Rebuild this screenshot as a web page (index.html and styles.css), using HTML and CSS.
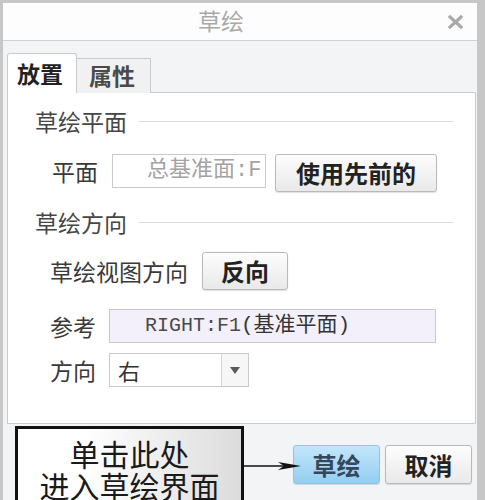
FILE: index.html
```html
<!DOCTYPE html>
<html lang="zh-CN">

<head>
    <meta charset="UTF-8">
    <meta name="viewport" content="width=device-width, initial-scale=1.0">
    <title>草绘</title>
    <link rel="stylesheet" href="styles.css">
</head>

<body>
    <div class="dialog">
        <div class="titlebar">
            <span class="title">草绘</span>
            <svg class="close" width="15" height="14" viewBox="0 0 15 14">
                <path d="M2 2 L13 12 M13 2 L2 12" stroke="#a9a9a9" stroke-width="3.2" stroke-linecap="square" />
            </svg>
        </div>

        <div class="tabs">
            <div class="tab active">放置</div>
            <div class="tab">属性</div>
        </div>

        <div class="panel">
            <div class="section">
                <span>草绘平面</span>
                <div class="rule"></div>
            </div>
            <div class="row row-plane">
                <span class="label label-plane">平面</span>
                <div class="field field-plane">总基准面:F</div>
                <button class="btn btn-prev">使用先前的</button>
            </div>

            <div class="section section-dir">
                <span>草绘方向</span>
                <div class="rule"></div>
            </div>
            <div class="row row-view">
                <span class="label">草绘视图方向</span>
                <button class="btn btn-flip">反向</button>
            </div>
            <div class="row row-ref">
                <span class="label label-ref">参考</span>
                <div class="field field-ref"><span class="mono">RIGHT:F1</span>(基准平面)</div>
            </div>
            <div class="row row-orient">
                <span class="label label-ref">方向</span>
                <div class="select">
                    <span class="select-value">右</span>
                    <span class="select-arrow">
                        <svg width="10" height="7" viewBox="0 0 10 7"><path d="M0 0 H10 L5 7 Z" fill="#5a5a5a" /></svg>
                    </span>
                </div>
            </div>
        </div>

        <div class="footer">
            <div class="callout">单击此处<br>进入草绘界面</div>
            <svg class="arrow" width="58" height="10" viewBox="0 0 58 10">
                <line x1="0" y1="5" x2="44" y2="5" stroke="#111" stroke-width="1.6" />
                <polygon points="57,5 34,1 40,5 34,9" fill="#111" />
            </svg>
            <button class="btn btn-ok">草绘</button>
            <button class="btn btn-cancel">取消</button>
        </div>
    </div>
</body>

</html>
```

FILE: styles.css
```css
* {
    margin: 0;
    padding: 0;
    box-sizing: border-box;
}

body {
    background: #c7c7c7;
    padding: 3px 0 0 3px;
    font-family: "Noto Sans CJK SC", "Liberation Sans", sans-serif;
    overflow: hidden;
}

.dialog {
    width: 474px;
    height: 520px;
    background: #f3f4f6;
}

.titlebar {
    display: flex;
    align-items: center;
    height: 38px;
    padding-right: 14px;
    background: #fdfdfd;
    border-bottom: 1px solid #d2d2d4;
}

.title {
    flex: 1;
    text-align: center;
    font-size: 23px;
    color: #a9a9a9;
    line-height: 1;
    margin-top: -2px;
}

.close {
    margin-left: 9px;
    margin-top: 1px;
}

.tabs {
    display: flex;
    align-items: flex-end;
    padding: 12px 0 0 4px;
    position: relative;
    z-index: 1;
}

.tab {
    width: 74px;
    height: 35px;
    background: #f1f1f2;
    border: 1px solid #cbcbcd;
    border-bottom: none;
    border-left: none;
    font-size: 23px;
    font-weight: bold;
    color: #4a4a4a;
    line-height: 33px;
    padding-left: 12px;
}

.tab.active {
    width: 70px;
    height: 40px;
    background: #fff;
    border-left: 1px solid #cbcbcd;
    border-radius: 3px 3px 0 0;
    color: #222;
    padding-left: 9px;
    line-height: 38px;
}

.panel {
    margin: -1px 1px 0 4px;
    height: 332px;
    background: #fff;
    border: 1px solid #cbcbcd;
    padding: 0 22px 0 0;
}

.section {
    display: flex;
    align-items: center;
    height: 28px;
    margin-top: 14px;
    padding-left: 27px;
    font-size: 23px;
    color: #464646;
}

.section-dir {
    margin-top: 16px;
}

.rule {
    flex: 1;
    height: 1px;
    background: #dcdcdc;
    margin-left: 12px;
}

.row {
    display: flex;
    align-items: center;
    padding-left: 42px;
    font-size: 23px;
    color: #3a3a3a;
}

.label {
    margin-right: 14px;
}

.label-plane {
    width: 62px;
    margin-right: 0;
    padding-left: 2px;
}

.label-ref {
    width: 59px;
    margin-right: 0;
}

.row-plane {
    margin-top: 19px;
    align-items: flex-start;
}

.row-plane .label {
    line-height: 34px;
}

.field {
    height: 34px;
    border: 1px solid #cacaca;
    background: #fff;
    line-height: 32px;
    white-space: nowrap;
    overflow: hidden;
    font-family: "Liberation Mono", "Noto Sans CJK SC", monospace;
}

.field-plane {
    width: 154px;
    padding-left: 34px;
    color: #a3a3a3;
    font-size: 22px;
}

.btn {
    font-family: "Noto Sans CJK SC", "Liberation Sans", sans-serif;
    font-weight: bold;
    font-size: 24px;
    color: #222;
    background: linear-gradient(#fdfdfd, #e9e9e9);
    border: 1px solid #b9b9b9;
    border-radius: 3px;
    box-shadow: 0 1px 1px rgba(0, 0, 0, 0.12);
    line-height: 1;
}

.btn-prev {
    width: 162px;
    height: 38px;
    margin-left: 9px;
}

.row-view {
    margin-top: 16px;
}

.btn-flip {
    width: 86px;
    height: 38px;
}

.row-ref {
    margin-top: 19px;
}

.field-ref {
    width: 327px;
    background: #f3f0fb;
    padding-left: 35px;
    font-size: 21px;
    color: #333;
}

.mono {
    color: #4a4a4a;
    font-size: 20px;
}

.row-orient {
    margin-top: 10px;
}

.select {
    display: flex;
    width: 140px;
    height: 34px;
    border: 1px solid #cacaca;
    background: #fff;
}

.select-value {
    flex: 1;
    padding-left: 8px;
    line-height: 32px;
    font-size: 22px;
    color: #333;
}

.select-arrow {
    width: 27px;
    border-left: 1px solid #d6d6d6;
    background: #f6f6f6;
    display: flex;
    align-items: center;
    justify-content: center;
}

.footer {
    display: flex;
    align-items: flex-start;
    padding-left: 12px;
}

.callout {
    width: 229px;
    height: 90px;
    margin-top: 2px;
    border: 3px solid #111;
    background: linear-gradient(to right, #ffffff 30%, #dcdcdc);
    padding-top: 8px;
    text-align: center;
    font-size: 30px;
    line-height: 32px;
    color: #1a1a1a;
}

.arrow {
    margin-top: 37px;
    margin-right: -9px;
    position: relative;
    z-index: 1;
}

.btn-ok {
    width: 87px;
    height: 39px;
    margin-top: 21px;
    background: linear-gradient(#c3e6fa, #93cef1);
    border-color: #8fc6e8;
    color: #34485c;
}

.btn-cancel {
    width: 87px;
    height: 39px;
    margin-top: 21px;
    margin-left: 5px;
}
```
